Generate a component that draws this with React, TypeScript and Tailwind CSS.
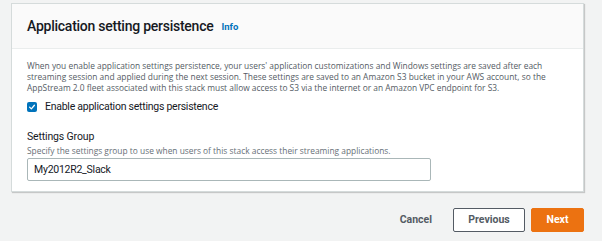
export default function App() {
  return (
    <div className="w-[602px] h-[241px] bg-[#f2f3f3] pt-[3px] pl-[11px] font-['Roboto',sans-serif] text-[#16191f]">
      <div className="w-[573px] bg-white border border-[#d5dbdb] shadow-[1px_1px_1px_rgba(0,0,0,0.18)]">
        <div className="h-[45px] bg-[#fafafa] border-b border-[#eaeded] flex items-center px-[15px] gap-[8px]">
          <h2 className="text-[14px] font-medium tracking-[-0.25px]">Application setting persistence</h2>
          <a className="text-[9.5px] font-bold text-[#0073bb] mt-[2px]">Info</a>
        </div>
        <div className="px-[15px] pt-[11px] pb-[10px]">
          <p className="font-['Open_Sans',sans-serif] text-[8.4px] leading-[11px] text-[#545b64]">
            When you enable application settings persistence, your users' application customizations and Windows settings are saved after each streaming session and applied during the next session. These settings are saved to an Amazon S3 bucket in your AWS account, so the AppStream 2.0 fleet associated with this stack must allow access to S3 via the internet or an Amazon VPC endpoint for S3.
          </p>
          <label className="flex items-center gap-[8px] mt-[6px]">
            <span className="w-[10px] h-[10px] rounded-[2px] bg-[#0073bb] flex items-center justify-center">
              <svg viewBox="0 0 10 10" className="w-[8px] h-[8px]">
                <path d="M2 5.2 L4.2 7.3 L8 2.8" fill="none" stroke="white" strokeWidth="1.6" strokeLinecap="round" strokeLinejoin="round" />
              </svg>
            </span>
            <span className="text-[10.5px] tracking-[-0.25px]">Enable application settings persistence</span>
          </label>
          <div className="mt-[14px] text-[10.5px] tracking-[-0.15px]">Settings Group</div>
          <div className="font-['Open_Sans',sans-serif] text-[8.4px] text-[#687078]">Specify the settings group to use when users of this stack access their streaming applications.</div>
          <div className="mt-[1px] w-[404px] h-[23px] border border-[#aab7b8] rounded-[2px] flex items-center px-[6px] text-[10.5px] tracking-[-0.25px]">
            My2012R2_Slack
          </div>
        </div>
      </div>
      <div className="w-[573px] flex justify-end items-center mt-[16px] gap-[6px]">
        <button className="text-[10.5px] font-bold text-[#545b64] pl-[20px] pr-[15px]">Cancel</button>
        <button className="w-[72px] h-[24px] border border-[#545b64] rounded-[2px] bg-white text-[10.5px] font-bold text-[#545b64]">Previous</button>
        <button className="w-[53px] h-[24px] rounded-[2px] bg-[#ec7211] border border-[#ec7211] text-[10.5px] font-bold text-white">Next</button>
      </div>
    </div>
  );
}
